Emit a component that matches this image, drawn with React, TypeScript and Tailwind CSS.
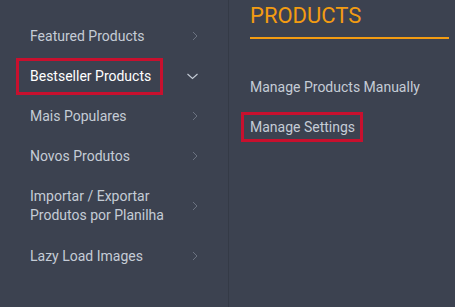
import React from "react";

const Right = () => (
  <svg width="10" height="10" viewBox="0 0 10 10" className="shrink-0">
    <path d="M5 1 L9 5 L5 9" fill="none" stroke="#6b7280" strokeWidth="1" />
  </svg>
);
const Down = () => (
  <svg width="12" height="10" viewBox="0 0 12 10" className="shrink-0">
    <path d="M1.5 3 L6.5 7.5 L11.5 3" fill="none" stroke="#c5ccd6" strokeWidth="1.1" />
  </svg>
);

const items = [
  { label: "Featured Products" },
  { label: "Bestseller Products", active: true },
  { label: "Mais Populares" },
  { label: "Novos Produtos" },
  { label: "Importar / Exportar\nProdutos por Planilha", tall: true },
  { label: "Lazy Load Images" },
];

export default function App() {
  return (
    <div
      className="w-[455px] h-[307px] bg-[#3c4250] flex text-[14px]"
      style={{ fontFamily: "Roboto, 'Noto Sans', sans-serif" }}
    >
      <div className="w-[229px] shrink-0 border-r border-[#343a46] pt-[16px] pl-[16px] pr-[30px]">
        {items.map((it, i) => (
          <div
            key={i}
            className={`flex items-center justify-between ${it.tall ? "h-[60px]" : "h-[40px]"}`}
          >
            {it.active ? (
              <div className="h-[37px] w-[147px] border-[3px] border-[#c8102e] flex items-center pl-[11px] text-white">
                Bestseller Products
              </div>
            ) : (
              <div className="pl-[14px] text-[#c5ccd6] whitespace-pre-line leading-[19px]">{it.label}</div>
            )}
            <div>{it.active ? <Down /> : <Right />}</div>
          </div>
        ))}
      </div>
      <div className="flex-1 pl-[20px] pr-[6px]">
        <div className="text-[22px] leading-[26px] text-[#f39c12] pt-[3px] pl-[1px]">PRODUCTS</div>
        <div className="h-[2px] bg-[#f39c12] mt-[8px] ml-[1px] w-[199px]" />
        <div className="text-[#c5ccd6] mt-[38px] leading-[20px] pl-[1px]">Manage Products Manually</div>
        <div className="mt-[15px] h-[30px] w-[122px] -ml-[8px] border-[3px] border-[#c8102e] flex items-center pl-[6px] text-[#c5ccd6]">
          Manage Settings
        </div>
      </div>
    </div>
  );
}
